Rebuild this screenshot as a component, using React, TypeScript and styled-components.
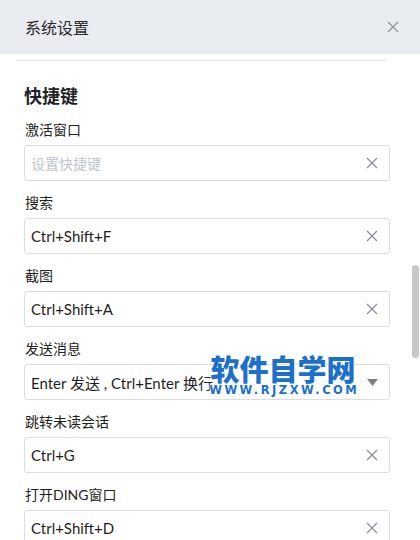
import React from 'react';
import styled, { createGlobalStyle } from 'styled-components';

const GlobalStyle = createGlobalStyle`
  html, body {
    margin: 0;
    padding: 0;
    background: #ffffff;
  }
  body {
    font-family: Lato, "Noto Sans CJK SC", sans-serif;
    color: #333;
  }
`;

const Window = styled.div`
  width: 420px;
  height: 540px;
  overflow: hidden;
  position: relative;
  background: #fff;
  display: flex;
  flex-direction: column;
`;

const Header = styled.div`
  height: 54px;
  flex: none;
  background: #e9ecf1;
  display: flex;
  align-items: center;
  justify-content: space-between;
  padding: 0 21px 0 25px;
  box-sizing: border-box;
`;

const Title = styled.div`
  font-size: 16px;
  color: #2b2b2b;
`;

const Body = styled.div`
  flex: 1;
  position: relative;
  padding: 6px 30px 0 24px;
`;

const Divider = styled.div`
  height: 1px;
  background: #e6e6e6;
  margin: 0 3px 0 -8px;
`;

const Heading = styled.div`
  font-size: 18px;
  font-weight: 700;
  line-height: 24px;
  color: #1f2329;
  margin: 23px 0 12px 0;
`;

const Group = styled.div`
  display: flex;
  flex-direction: column;
  margin-bottom: 12px;
`;

const Label = styled.div`
  font-size: 14px;
  line-height: 20px;
  color: #222;
  margin: 0 0 5px 1px;
`;

const Field = styled.div`
  height: 36px;
  box-sizing: border-box;
  border: 1px solid #dcdde0;
  border-radius: 3px;
  display: flex;
  align-items: center;
  justify-content: space-between;
  padding: 0 11px 0 6px;
`;

const Value = styled.span<{ $placeholder?: boolean }>`
  font-size: ${({ $placeholder }) => ($placeholder ? '14px' : '15px')};
  color: ${({ $placeholder }) => ($placeholder ? '#c0c4cc' : '#1f1f1f')};
`;

const Scrollbar = styled.div`
  position: absolute;
  right: 1px;
  top: 211px;
  width: 7px;
  height: 93px;
  border-radius: 4px;
  background: #c8c8c8;
`;

const Watermark = styled.div`
  position: absolute;
  left: 210px;
  top: 300px;
  width: 146px;
  display: flex;
  flex-direction: column;
  align-items: center;
  gap: 2px;
  color: #1c70c9;
  font-family: "Noto Sans CJK SC", sans-serif;
  font-weight: 900;
  text-shadow: 0 0 2px #fff, 0 0 2px #fff;
`;

const WatermarkTitle = styled.div`
  font-size: 29px;
  line-height: 29px;
`;

const WatermarkUrl = styled.div`
  font-family: "DejaVu Sans", sans-serif;
  font-size: 11.5px;
  line-height: 11px;
  letter-spacing: 2.5px;
  margin-right: -2.5px;
  font-weight: 700;
`;

const Cross = ({ size = 12, color = '#8a8f99' }: { size?: number; color?: string }) => (
  <svg width={size} height={size} viewBox="0 0 12 12">
    <path d="M1 1 L11 11 M11 1 L1 11" stroke={color} strokeWidth="1.3" fill="none" />
  </svg>
);

const Caret = () => (
  <svg width="11" height="7" viewBox="0 0 11 7">
    <path d="M0 0 H11 L5.5 7 Z" fill="#7f7f7f" />
  </svg>
);

type Item = { label: string; value: string; placeholder?: boolean; select?: boolean };

const items: Item[] = [
  { label: '激活窗口', value: '设置快捷键', placeholder: true },
  { label: '搜索', value: 'Ctrl+Shift+F' },
  { label: '截图', value: 'Ctrl+Shift+A' },
  { label: '发送消息', value: 'Enter 发送 , Ctrl+Enter 换行', select: true },
  { label: '跳转未读会话', value: 'Ctrl+G' },
  { label: '打开DING窗口', value: 'Ctrl+Shift+D' },
];

export default function App() {
  return (
    <Window>
      <GlobalStyle />
      <Header>
        <Title>系统设置</Title>
        <Cross size={12} color="#8f959e" />
      </Header>
      <Body>
        <Divider />
        <Heading>快捷键</Heading>
        {items.map(it => (
          <Group key={it.label}>
            <Label>{it.label}</Label>
            <Field>
              <Value $placeholder={it.placeholder}>{it.value}</Value>
              {it.select ? <Caret /> : <Cross />}
            </Field>
          </Group>
        ))}
        <Scrollbar />
        <Watermark>
          <WatermarkTitle>软件自学网</WatermarkTitle>
          <WatermarkUrl>WWW.RJZXW.COM</WatermarkUrl>
        </Watermark>
      </Body>
    </Window>
  );
}
